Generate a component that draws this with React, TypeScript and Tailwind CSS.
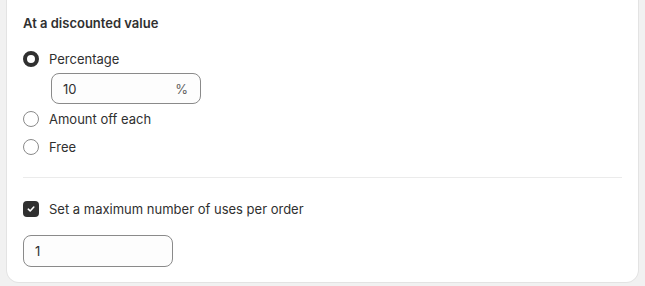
function Radio({ checked, label }: { checked?: boolean; label: string }) {
  return (
    <label className="flex items-center gap-[10px] h-5">
      <span
        className={
          checked
            ? 'w-4 h-4 rounded-full border-[4.5px] border-[#303030] bg-white'
            : 'w-4 h-4 rounded-full border border-[#8a8a8a] bg-white'
        }
      />
      <span>{label}</span>
    </label>
  );
}

export default function App() {
  return (
    <div
      className="min-h-[286px] bg-[#f1f1f1] px-[7px] pb-[5px] text-[13px] leading-5 text-[#303030]"
      style={{ fontFamily: 'Inter, "Liberation Sans", sans-serif' }}
    >
      <div className="bg-white rounded-b-[12px] shadow-[0_1px_0_0_#e3e3e3,1px_0_0_0_#e3e3e3,-1px_0_0_0_#e3e3e3] px-4 pt-[13px] pb-[15px]">
        <h2 className="font-semibold">At a discounted value</h2>

        <div className="mt-4 flex flex-col">
          <Radio checked label="Percentage" />
          <div className="mt-1 ml-7 w-[150px] h-[31px] rounded-lg border border-[#8a8a8a] bg-[#fdfdfd] flex items-center justify-between pl-[11px] pr-3">
            <span>10</span>
            <span className="text-[#616161]">%</span>
          </div>
          <div className="mt-[5px]">
            <Radio label="Amount off each" />
          </div>
          <div className="mt-2">
            <Radio label="Free" />
          </div>
        </div>

        <div className="mt-5 h-px bg-[#ebebeb]" />

        <label className="mt-[21px] flex items-center gap-[10px] h-5">
          <span className="w-4 h-4 rounded-[4px] bg-[#303030] flex items-center justify-center">
            <svg width="10" height="10" viewBox="0 0 10 10" fill="none">
              <path d="M2.3 5.2 4.2 7 7.8 3" stroke="white" strokeWidth="1.6" strokeLinecap="round" strokeLinejoin="round" />
            </svg>
          </span>
          <span>Set a maximum number of uses per order</span>
        </label>

        <div className="mt-4 w-[150px] h-[32px] rounded-lg border border-[#8a8a8a] bg-[#fdfdfd] flex items-center pl-[11px]">
          <span>1</span>
        </div>
      </div>
    </div>
  );
}
